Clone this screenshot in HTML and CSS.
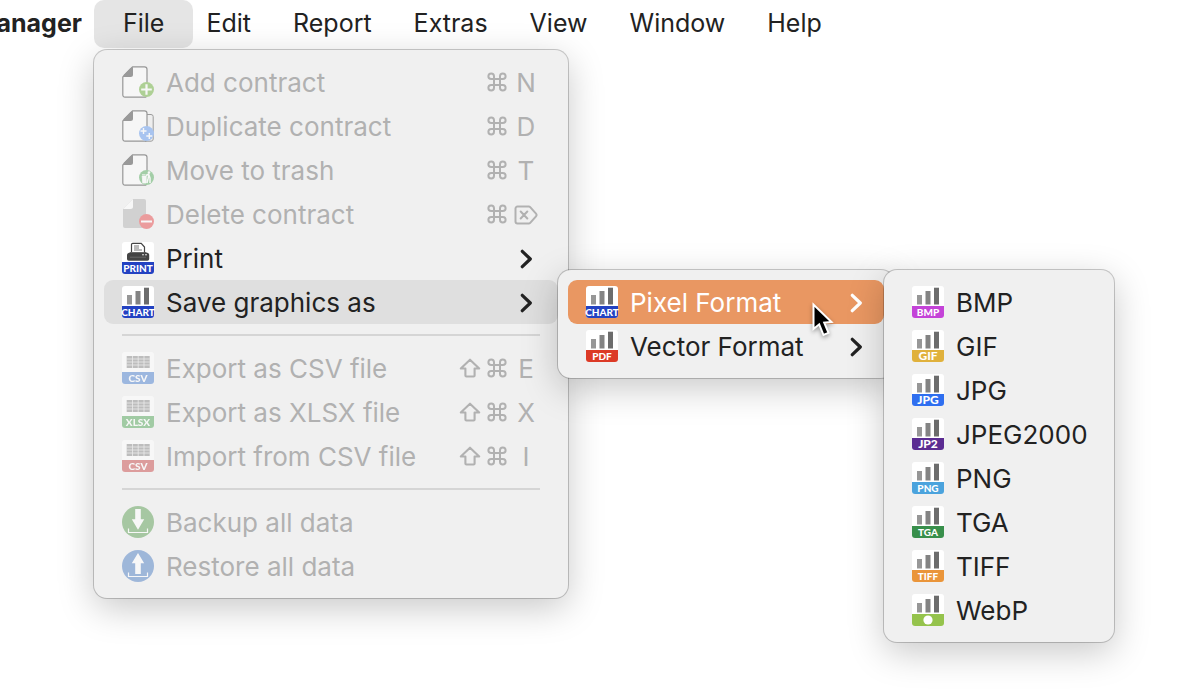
FILE: index.html
```html
<!DOCTYPE html>
<html lang="en">
<head>
<meta charset="utf-8">
<title>Manager</title>
<link rel="stylesheet" href="styles.css">
</head>
<body>
<svg class="sprite" aria-hidden="true">
  <defs>
    <symbol id="strip" viewBox="0 0 32 32"><path d="M0 20h32v9a3 3 0 0 1-3 3H3a3 3 0 0 1-3-3z" fill="currentColor"/></symbol>
    <symbol id="tile" viewBox="0 0 32 32"><rect width="32" height="32" rx="3" fill="#fff"/></symbol>
    <symbol id="chart" viewBox="0 0 32 32">
      <use href="#tile"/><use href="#strip"/>
      <path d="M5 9h5v9.500H5z" fill="#979797"/><path d="M13.500 5h5v13.500h-5z" fill="#838383"/><path d="M22 1.700h5v16.800h-5z" fill="#6c6c6c"/>
    </symbol>
    <symbol id="sheet" viewBox="0 0 32 32">
      <use href="#tile"/><use href="#strip"/>
      <rect x="4.700" y="4" width="23" height="12" fill="#8b8b8b"/>
      <path d="M4.700 7h23M4.700 10h23M4.700 13h23M10.500 4v12M16.200 4v12M22 4v12" stroke="#fff" stroke-width="0.800" opacity="0.800"/>
    </symbol>
    <symbol id="doc" viewBox="0 0 32 32">
      <path d="M10.500 .8h12a2.500 2.500 0 0 1 2.500 2.500v25.400a2.500 2.500 0 0 1-2.500 2.500H3A2.200 2.200 0 0 1 .8 29V11z" fill="#fcfcfc" stroke="#404040" stroke-width="1.200"/>
      <path d="M11 1v7.500a2.500 2.500 0 0 1-2.500 2.500H1L2 8.500 8.500 2z" fill="#444"/>
    </symbol>
    <symbol id="command" viewBox="0 0 20 20"><path d="M7 7h6v6H7zM7 7V4.200A2.800 2.800 0 1 0 4.200 7H7zM13 7h2.800A2.800 2.800 0 1 0 13 4.200V7zM13 13v2.800a2.800 2.800 0 1 0 2.800-2.800H13zM7 13H4.200A2.800 2.800 0 1 0 7 15.800V13z" fill="none" stroke="currentColor" stroke-width="2"/></symbol>
    <symbol id="shift" viewBox="0 0 22 20"><path d="M11 1.700 1.800 10.500h4.600v7a1 1 0 0 0 1 1h7.200a1 1 0 0 0 1-1v-7h4.600z" fill="none" stroke="currentColor" stroke-width="2.100" stroke-linejoin="round"/></symbol>
    <symbol id="erase" viewBox="0 0 24 20"><path d="M3.500 1.500h11.200a2 2 0 0 1 1.500.700L22 8.700a2 2 0 0 1 0 2.600l-5.800 6.500a2 2 0 0 1-1.500.700H3.500a2 2 0 0 1-2-2v-13a2 2 0 0 1 2-2zM6.700 6.500l6.600 7M13.300 6.500l-6.600 7" fill="none" stroke="currentColor" stroke-width="2" stroke-linecap="round"/></symbol>
    <symbol id="chevron" viewBox="0 0 12 20"><path d="m2.300 2.300 8 7.700-8 7.700" fill="none" stroke="currentColor" stroke-width="3.200" stroke-linecap="round" stroke-linejoin="round"/></symbol>
  </defs>
</svg>

<nav class="menubar" aria-label="Application menu">
  <div class="brand"><strong>Manager</strong></div>
  <div class="entry">
    <button class="title title-open" type="button" aria-haspopup="true" aria-expanded="true">File</button>
    <ul class="menu menu-file">
      <li><button class="item" type="button" disabled>
        <svg class="icon" viewBox="0 0 32 32"><use href="#doc"/><circle cx="24.500" cy="23.500" r="7.500" fill="#6fb23d"/><path d="M24.500 18.200v10.600M19.200 23.500h10.600" stroke="#fff" stroke-width="2.200"/></svg>
        <span class="label">Add contract</span><svg class="glyph"><use href="#command"/></svg><span class="key">N</span></button></li>
      <li><button class="item" type="button" disabled>
        <svg class="icon" viewBox="0 0 32 32"><path d="M23 4.500h6a2.200 2.200 0 0 1 2.200 2.200V29a2.200 2.200 0 0 1-2.200 2.200h-6" fill="#eee" stroke="#494949"/><use href="#doc"/><circle cx="24.500" cy="23.500" r="7.500" fill="#629af0"/><path d="M21.500 18v6M18.500 21h6M27.300 23v6M24.300 26h6" stroke="#fff" stroke-width="1.400"/></svg>
        <span class="label">Duplicate contract</span><svg class="glyph"><use href="#command"/></svg><span class="key">D</span></button></li>
      <li><button class="item" type="button" disabled>
        <svg class="icon" viewBox="0 0 32 32"><use href="#doc"/><circle cx="24.500" cy="23.500" r="7.500" fill="#58ad61"/><path d="M20.200 22h4v7h-3.400zM20 20.700h3.500" fill="#fff" stroke="#fff" stroke-width="0.800"/><circle cx="27" cy="18.500" r="1.300" fill="#fff"/><path d="m24 21.500 2.600-1.400 1.400 4v5M26.800 21l-.8 4-1 4" fill="none" stroke="#fff" stroke-width="1.500"/></svg>
        <span class="label">Move to trash</span><svg class="glyph"><use href="#command"/></svg><span class="key">T</span></button></li>
      <li><button class="item" type="button" disabled>
        <svg class="icon" viewBox="0 0 32 32"><path d="M11 1h11a2 2 0 0 1 2 2v25a2 2 0 0 1-2 2H3a2 2 0 0 1-2-2V11z" fill="#b3b3b3"/><path d="M11 1v7.500a2.500 2.500 0 0 1-2.500 2.500H1z" fill="#fff"/><circle cx="24.500" cy="23.500" r="7.500" fill="#e84b4d"/><path d="M19 23.500h11" stroke="#fff" stroke-width="2"/></svg>
        <span class="label">Delete contract</span><svg class="glyph"><use href="#command"/></svg><span class="key"><svg class="glyph-wide"><use href="#erase"/></svg></span></button></li>
      <li><button class="item" type="button" aria-haspopup="true">
        <svg class="icon blue" viewBox="0 0 32 32"><use href="#tile"/><use href="#strip"/><path d="M9.500 11V2.500a1.200 1.200 0 0 1 1.200-1.200h8.500L22.500 5v6" fill="#fff" stroke="#444" stroke-width="1.200"/><path d="M12 4h5M12 6h5M12 8h8" stroke="#777" stroke-width="1"/><path d="M9 10h14l3 1a2 2 0 0 1 1.200 1.800V17a1.800 1.800 0 0 1-1.800 1.800H6.800A1.800 1.800 0 0 1 5 17v-4a2 2 0 0 1 1.500-2z" fill="#444"/><path d="M9 10.500h13.500M8 15.200h16" stroke="#777" stroke-width="0.700"/><circle cx="21" cy="12.700" r="0.800" fill="#fff"/><circle cx="24" cy="12.700" r="0.800" fill="#fff"/><text x="16" y="30">PRINT</text></svg>
        <span class="label">Print</span><span class="key"><svg class="chevron"><use href="#chevron"/></svg></span></button></li>
      <li class="parent"><button class="item item-open" type="button" aria-haspopup="true" aria-expanded="true">
        <svg class="icon blue" viewBox="0 0 32 32"><use href="#chart"/><text x="16" y="30">CHART</text></svg>
        <span class="label">Save graphics as</span><span class="key"><svg class="chevron"><use href="#chevron"/></svg></span></button>
        <ul class="menu menu-sub menu-format">
          <li class="parent"><button class="item item-active" type="button" aria-haspopup="true" aria-expanded="true">
            <svg class="icon blue" viewBox="0 0 32 32"><use href="#chart"/><text x="16" y="30">CHART</text></svg>
            <span class="label">Pixel Format</span><span class="key"><svg class="chevron"><use href="#chevron"/></svg></span></button>
            <svg class="pointer" viewBox="0 0 24 36" aria-hidden="true"><path d="M2.500 2.500v24.500l5.700-4.700 4.300 10.700 5-2.200-4.300-10.100 7.300-.7z" fill="#000" stroke="#fff" stroke-width="2"/></svg>
            <ul class="menu menu-sub menu-pixel">
              <li><button class="item" type="button"><svg class="icon magenta" viewBox="0 0 32 32"><use href="#chart"/><text x="16" y="30">BMP</text></svg><span class="label">BMP</span></button></li>
              <li><button class="item" type="button"><svg class="icon gold large" viewBox="0 0 32 32"><use href="#chart"/><text x="16" y="30">GIF</text></svg><span class="label">GIF</span></button></li>
              <li><button class="item" type="button"><svg class="icon azure large" viewBox="0 0 32 32"><use href="#chart"/><text x="16" y="30">JPG</text></svg><span class="label">JPG</span></button></li>
              <li><button class="item" type="button"><svg class="icon violet large" viewBox="0 0 32 32"><use href="#chart"/><text x="16" y="30">JP2</text></svg><span class="label">JPEG2000</span></button></li>
              <li><button class="item" type="button"><svg class="icon sky" viewBox="0 0 32 32"><use href="#chart"/><text x="16" y="30">PNG</text></svg><span class="label">PNG</span></button></li>
              <li><button class="item" type="button"><svg class="icon green" viewBox="0 0 32 32"><use href="#chart"/><text x="16" y="30">TGA</text></svg><span class="label">TGA</span></button></li>
              <li><button class="item" type="button"><svg class="icon orange" viewBox="0 0 32 32"><use href="#chart"/><text x="16" y="30">TIFF</text></svg><span class="label">TIFF</span></button></li>
              <li><button class="item" type="button"><svg class="icon lime" viewBox="0 0 32 32"><use href="#chart"/><circle cx="16" cy="26" r="4.600" fill="#fff"/></svg><span class="label">WebP</span></button></li>
            </ul>
          </li>
          <li><button class="item" type="button" aria-haspopup="true">
            <svg class="icon red" viewBox="0 0 32 32"><use href="#chart"/><text x="16" y="30">PDF</text></svg>
            <span class="label">Vector Format</span><span class="key"><svg class="chevron"><use href="#chevron"/></svg></span></button></li>
        </ul>
      </li>
      <li class="separator" role="separator"></li>
      <li><button class="item" type="button" disabled>
        <svg class="icon csv-blue" viewBox="0 0 32 32"><use href="#sheet"/><text x="16" y="30">CSV</text></svg>
        <span class="label">Export as CSV file</span><svg class="glyph-wide"><use href="#shift"/></svg><svg class="glyph"><use href="#command"/></svg><span class="key">E</span></button></li>
      <li><button class="item" type="button" disabled>
        <svg class="icon csv-green" viewBox="0 0 32 32"><use href="#sheet"/><text x="16" y="30">XLSX</text></svg>
        <span class="label">Export as XLSX file</span><svg class="glyph-wide"><use href="#shift"/></svg><svg class="glyph"><use href="#command"/></svg><span class="key">X</span></button></li>
      <li><button class="item" type="button" disabled>
        <svg class="icon csv-red" viewBox="0 0 32 32"><use href="#sheet"/><text x="16" y="30">CSV</text></svg>
        <span class="label">Import from CSV file</span><svg class="glyph-wide"><use href="#shift"/></svg><svg class="glyph"><use href="#command"/></svg><span class="key">I</span></button></li>
      <li class="separator" role="separator"></li>
      <li><button class="item" type="button" disabled>
        <svg class="icon" viewBox="0 0 32 32"><circle cx="16" cy="16" r="16" fill="#5fa056"/><path d="M13.200 3h5.600v10.300h3.400L16 23.700 9.800 13.300h3.400z" fill="#fff"/><path d="M6.500 22.500v4h19v-4" fill="none" stroke="#fff" stroke-width="1.200"/></svg>
        <span class="label">Backup all data</span></button></li>
      <li><button class="item" type="button" disabled>
        <svg class="icon" viewBox="0 0 32 32"><circle cx="16" cy="16" r="16" fill="#4f7fc4"/><path d="M16 3l6.200 10.300h-3.400V24h-5.600V13.300H9.800z" fill="#fff"/><path d="M6.500 22.500v4h19v-4" fill="none" stroke="#fff" stroke-width="1.200"/></svg>
        <span class="label">Restore all data</span></button></li>
    </ul>
  </div>
  <button class="title" type="button">Edit</button>
  <button class="title" type="button">Report</button>
  <button class="title" type="button">Extras</button>
  <button class="title" type="button">View</button>
  <button class="title" type="button">Window</button>
  <button class="title" type="button">Help</button>
</nav>
</body>
</html>
```

FILE: styles.css
```css
* { box-sizing: border-box; }

body {
  min-height: 100vh;
  margin: 0;
  background: #fff;
  color: #222;
  font: 25px/32px Inter, "Liberation Sans", sans-serif;
}

button {
  border: 0;
  background: none;
  color: inherit;
  font: inherit;
}

.sprite { position: absolute; width: 0; height: 0; }

.menubar { display: flex; gap: 42px; height: 48px; }

.brand {
  display: flex;
  justify-content: flex-end;
  align-items: center;
  width: 82px;
  overflow: hidden;
}

.brand strong { padding-bottom: 2px; }

.title { height: 48px; padding: 0 0 2px; }

.entry { position: relative; margin: 0 -29px 0 -30px; }

.title-open { padding: 0 29px 2px; border-radius: 10px; background: #e5e5e5; }

.menu {
  position: absolute;
  z-index: 1;
  margin: 0;
  padding: 10px;
  list-style: none;
  border-radius: 13px;
  background: #f0f0f0;
  font-size: 26px;
  box-shadow: 0 0 0 1px rgba(0, 0, 0, 0.2), 0 10px 36px rgba(0, 0, 0, 0.22);
}

.menu-file { top: 50px; left: 0; width: 474px; }
.menu-sub { top: -10px; left: 100%; }
.menu-format { width: 336px; }
.menu-pixel { width: 230px; }

.parent { position: relative; }

.item {
  display: flex;
  align-items: center;
  width: 100%;
  height: 44px;
  padding: 0 18px;
  border-radius: 9px;
  text-align: left;
  white-space: nowrap;
}

.item:disabled { color: #b1b1b1; }
.item:disabled .icon { opacity: 0.5; }
.item-open { background: #dfdfdf; }
.item-active { background: #e99762; color: #fff; }

.label { flex: 1; padding: 1px 0 0 12px; }

.icon { flex: none; width: 32px; height: 32px; overflow: visible; }

.icon text {
  fill: #fff;
  font: 900 10px Lato, "Open Sans", sans-serif;
  text-anchor: middle;
}

.icon.large text { font-size: 12px; }

.glyph { width: 20px; height: 20px; margin-right: 5px; }
.glyph-wide { width: 24px; height: 20px; }
.glyph-wide + .glyph { margin-left: 5px; }
.chevron { width: 12px; height: 20px; }

.key {
  display: flex;
  justify-content: center;
  align-items: center;
  width: 28px;
  padding-top: 1px;
}

.menu-format .key { width: 20px; }

.separator {
  height: 22px;
  margin: 0 18px;
  padding-top: 10px;
}

.separator::before {
  content: "";
  display: block;
  height: 2px;
  background: #d5d5d5;
}

.pointer {
  position: absolute;
  z-index: 2;
  top: 22px;
  left: 243px;
  width: 24px;
  height: 36px;
  filter: drop-shadow(0 2px 2px rgba(0, 0, 0, 0.35));
}

.blue { color: #2342c2; }
.magenta { color: #c443d8; }
.gold { color: #e0b13c; }
.azure { color: #2f6ff0; }
.violet { color: #5b2c92; }
.sky { color: #4ba3dd; }
.green { color: #388f4b; }
.orange { color: #ea953a; }
.lime { color: #95c34c; }
.red { color: #dc3a26; }
.csv-blue { color: #4a7fd0; }
.csv-green { color: #55a85a; }
.csv-red { color: #c94a4a; }
```
